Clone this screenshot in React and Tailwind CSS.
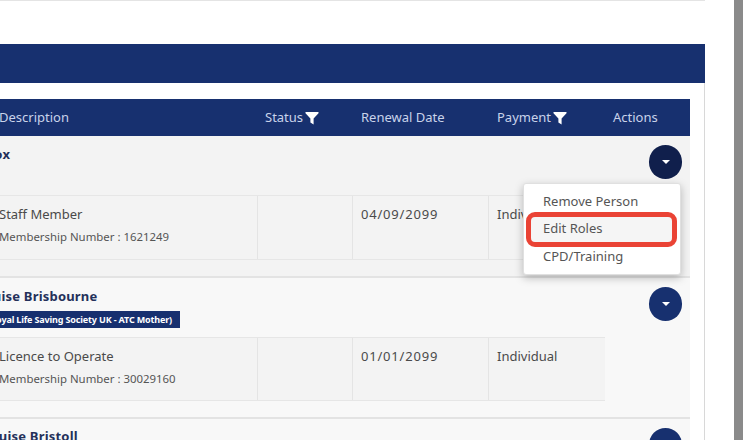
const font = "font-['Noto_Sans','Open_Sans',sans-serif]";

const Funnel = () => (
  <svg viewBox="0 0 14 14" className="w-[14px] h-[14px] fill-white">
    <path d="M0.5 1h13v1.3L8.6 7.4V13.5L5.4 11.6V7.4L0.5 2.3z" />
  </svg>
);

const ActionButton = ({ dark }) => (
  <div className={`w-[33px] h-[34px] rounded-full flex items-center justify-center ${dark ? 'bg-[#101f4c]' : 'bg-[#17306f]'}`}>
    <div className="w-0 h-0 border-x-[4px] border-x-transparent border-t-[4px] border-t-white" />
  </div>
);

const Person = ({ name, nameShift, badge, role, number, date, payment, dark, bg, rowHeight }) => (
  <div className={`relative ${bg} border-b-[2px] border-[#e3e3e3]`}>
    <div className="h-[59px] relative">
      <div className="absolute right-[8px] top-[9px]"><ActionButton dark={dark} /></div>
      <div className={`w-fit pt-[9px] text-[13px] font-bold text-[#24305a] leading-[18px] tracking-[0.2px] ${nameShift}`}>{name}</div>
      {badge && (
        <div className="flex justify-end mt-[6px] w-[180px] h-[17px] bg-[#17306f] text-white text-[9px] tracking-[-0.15px] font-bold leading-[17px] overflow-hidden pr-[8px] whitespace-nowrap">
          <span className="flex-none">{badge}</span>
        </div>
      )}
    </div>
    <div className={`flex ${rowHeight} mb-[16px] border-y border-[#e6e6e6] w-[605px] bg-[#f3f3f3] text-[#4a4a4a]`}>
      <div className="w-[258px] border-r border-[#e4e4e4] pt-[8px]">
        <div className="text-[13px] leading-[20px] ml-[-1px]">{role}</div>
        <div className="text-[11.4px] leading-[16px] mt-[5px] ml-[-1px] text-[#555]">{number}</div>
      </div>
      <div className="w-[95px] border-r border-[#e4e4e4]" />
      <div className="w-[136px] border-r border-[#e4e4e4] pl-[8px] pt-[8px] text-[13px] leading-[20px] tracking-[0.8px]">{date}</div>
      <div className="w-[116px] pl-[8px] pt-[8px] text-[13px] leading-[20px]">{payment}</div>
    </div>
  </div>
);

export default function App() {
  return (
    <div className={`w-[746px] h-[440px] overflow-hidden bg-white flex ${font}`}>
      <div className="w-[734px] h-full flex-none">
        <div className="w-[705px] h-[1px] bg-[#e4e4e4]" />
        <div className="w-[705px] h-[43px]" />
        <div className="w-[705px] h-[39px] bg-[#17306f]" />
        <div className="w-[705px] border-r border-[#d8d8d8] h-[357px] pt-[16px]">
          <div className="w-[690px]">
            <div className="flex items-center h-[37px] bg-[#17306f] text-[13px] text-[#c9d3ea]">
              <span className="w-[266px] ml-[-1px] flex-none">Description</span>
              <span className="w-[96px] flex-none flex items-center gap-[2px]">Status <Funnel /></span>
              <span className="w-[136px] flex-none">Renewal Date</span>
              <span className="w-[116px] flex-none flex items-center gap-[2px]">Payment <Funnel /></span>
              <span>Actions</span>
            </div>
            <div className="relative">
              <Person name="Fox" nameShift="ml-[-13px]" role="Staff Member" number="Membership Number : 1621249" date="04/09/2099" payment="Individual" dark bg="bg-[#f3f3f3]" rowHeight="h-[65px]" />
              <Person name="Louise Brisbourne" nameShift="ml-[-23px]" badge="(Royal Life Saving Society UK - ATC Mother)" role="Licence to Operate" number="Membership Number : 30029160" date="01/01/2099" payment="Individual" bg="bg-[#f8f8f8]" rowHeight="h-[64px]" />
              <div className="relative h-[30px] bg-[#f8f8f8]">
                <div className="absolute right-[8px] top-[9px]"><ActionButton /></div>
                <div className="w-fit pt-[8px] ml-[-17px] text-[13px] font-bold text-[#24305a] leading-[18px] tracking-[0.2px]">Louise Bristoll</div>
              </div>
              <div className="absolute left-[523px] top-[47px] w-[158px] h-[92px] bg-white rounded-[3px] border border-[#e0e0e0] shadow-[0_3px_8px_rgba(0,0,0,0.25)] text-[13px] text-[#555] pl-[19px] pt-[7px] leading-[20px]">
                <div className="absolute left-[2px] top-[28px] w-[151px] h-[35px] rounded-[9px] border-[5px] border-[#ea4335] bg-[#f5f5f5]" />
                <div className="relative h-[27px]">Remove Person</div>
                <div className="relative h-[28px]">Edit Roles</div>
                <div className="relative h-[27px]">CPD/Training</div>
              </div>
            </div>
          </div>
        </div>
      </div>
      <div className="w-[9px] h-full bg-[#8a8a8a]" />
    </div>
  );
}
